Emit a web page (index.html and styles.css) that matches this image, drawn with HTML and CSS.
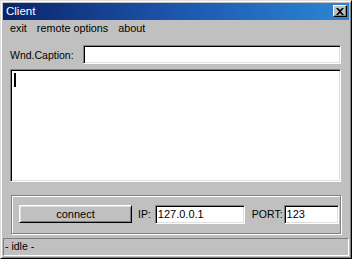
FILE: index.html
```html
<!DOCTYPE html>
<html>
<head>
    <title>Client</title>
    <link rel="stylesheet" href="styles.css">
</head>
<body>
    <div class="window">
        <div class="titlebar">
            <span class="title">Client</span>
            <span class="close-btn">
                <svg width="8" height="7" viewBox="0 0 8 7"><path d="M0 0h2l2 2 2-2h2L5 3.5 8 7H6L4 5 2 7H0l3-3.5z" fill="#000"/></svg>
            </span>
        </div>
        <div class="menubar">
            <span class="menu-item">exit</span>
            <span class="menu-item">remote options</span>
            <span class="menu-item">about</span>
        </div>
        <div class="content">
            <div class="caption-row">
                <span class="caption-label">Wnd.Caption:</span>
                <div class="edit caption-edit"></div>
            </div>
            <div class="edit memo"><span class="caret"></span></div>
            <div class="group">
                <div class="button">connect</div>
                <span class="ip-label">IP:</span>
                <div class="edit ip-edit">127.0.0.1</div>
                <span class="port-label">PORT:</span>
                <div class="edit port-edit">123</div>
            </div>
        </div>
        <div class="statusbar">- idle -</div>
    </div>
</body>
</html>
```

FILE: styles.css
```css
* { box-sizing: border-box; }
body { margin: 0; background: #c0c0c0; font-family: "Liberation Sans", Arial, sans-serif; font-size: 10.5px; color: #000; }

.window { width: 352px; height: 259px; display: flex; flex-direction: column; background: #c0c0c0; border: 1px solid; border-color: #dfdfdf #000 #000 #dfdfdf; box-shadow: inset 1px 1px #fff, inset -1px -1px #808080; padding: 2px; }

.titlebar { height: 17px; display: flex; align-items: center; justify-content: space-between; padding: 0 2px 0 3px; background: linear-gradient(to right, #0a246a, #1c56ad 50%, #2c86d4); }
.title { color: #fff; font-size: 11.5px; }
.close-btn { width: 14px; height: 12px; display: flex; align-items: center; justify-content: center; background: #c0c0c0; border: 1px solid; border-color: #fff #000 #000 #fff; box-shadow: inset -1px -1px #808080; }

.menubar { height: 18px; display: flex; align-items: center; padding-left: 2px; }
.menu-item { padding: 0 5px; font-size: 10.8px; }

.content { flex: 1; padding: 8px 8px 0 7px; }
.caption-row { display: flex; align-items: center; }
.caption-label { width: 73px; }

.edit { background: #fff; border: 1px solid; border-color: #808080 #fff #fff #808080; box-shadow: inset 1px 1px #000, inset -1px -1px #dfdfdf; padding: 0 2px; line-height: 17px; font-size: 11px; }
.caption-edit { flex: 1; height: 19px; }
.memo { margin-top: 5px; height: 113px; padding: 3px 3px; }
.caret { display: block; width: 2px; height: 14px; background: #000; }

.group { margin: 13px 0 0 1px; height: 39px; display: flex; align-items: center; padding: 0 0 2px 7px; border: 1px solid #808080; box-shadow: inset 1px 1px #fff, 1px 1px #fff; }
.button { width: 113px; height: 18px; line-height: 16px; text-align: center; font-size: 11px; background: #c0c0c0; border: 1px solid; border-color: #fff #000 #000 #fff; box-shadow: inset 1px 1px #dfdfdf, inset -1px -1px #808080; }
.ip-label { margin: 0 4px 0 6px; }
.ip-edit { width: 90px; height: 19px; margin-top: 1px; }
.port-label { margin: 0 1px 0 7px; }
.port-edit { width: 55px; height: 19px; margin-top: 1px; }

.statusbar { height: 18px; margin-top: 4px; line-height: 14px; padding: 0 0 2px 1px; border: 1px solid; border-color: #808080 #fff #fff #808080; }
```
